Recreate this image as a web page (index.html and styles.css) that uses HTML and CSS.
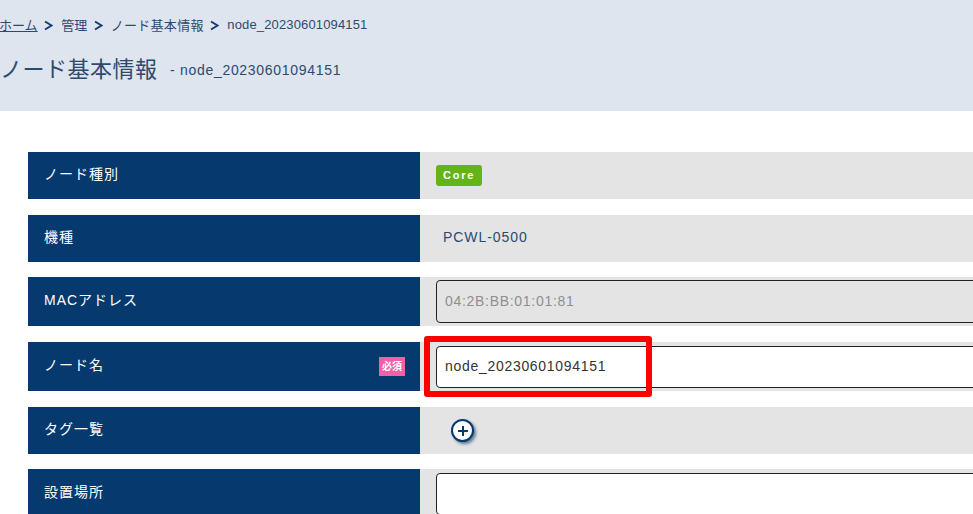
FILE: index.html
```html
<!doctype html>
<html lang="ja">
<head>
<meta charset="utf-8">
<title>ノード基本情報</title>
<link rel="stylesheet" href="styles.css">
</head>
<body>

<header class="pagehead">
  <ul class="crumbs">
    <li><a href="#">ホーム</a></li>
    <li class="sep"><svg width="9" height="11" viewBox="0 0 9 11"><path d="M1 1.5 7.5 5.5 1 9.5" fill="none" stroke="#163f6e" stroke-width="2"/></svg></li>
    <li>管理</li>
    <li class="sep"><svg width="9" height="11" viewBox="0 0 9 11"><path d="M1 1.5 7.5 5.5 1 9.5" fill="none" stroke="#163f6e" stroke-width="2"/></svg></li>
    <li class="crumbpage">ノード基本情報</li>
    <li class="sep"><svg width="9" height="11" viewBox="0 0 9 11"><path d="M1 1.5 7.5 5.5 1 9.5" fill="none" stroke="#163f6e" stroke-width="2"/></svg></li>
    <li class="crumbnode">node_20230601094151</li>
  </ul>
  <h1 class="pagetitle">ノード基本情報<span class="subtitle">- node_20230601094151</span></h1>
</header>

<div class="form">
  <div class="row r1">
    <div class="label"><span>ノード種別</span></div>
    <div class="value"><span class="badge">Core</span></div>
  </div>
  <div class="row r2">
    <div class="label"><span>機種</span></div>
    <div class="value"><span class="plain">PCWL-0500</span></div>
  </div>
  <div class="row r3">
    <div class="label"><span>MACアドレス</span></div>
    <div class="value"><input class="field disabled" type="text" value="04:2B:BB:01:01:81" disabled></div>
  </div>
  <div class="row r4">
    <div class="label"><span>ノード名</span><span class="required">必須</span></div>
    <div class="value"><input class="field" type="text" value="node_20230601094151"></div>
    <div class="callout"></div>
  </div>
  <div class="row r5">
    <div class="label"><span>タグ一覧</span></div>
    <div class="value">
      <button class="addbtn" type="button"><svg width="14" height="14" viewBox="0 0 14 14"><path d="M7 2v10M2 7h10" stroke="#07396d" stroke-width="2"/></svg></button>
    </div>
  </div>
  <div class="row r6">
    <div class="label"><span>設置場所</span></div>
    <div class="value"><input class="field" type="text"></div>
  </div>
</div>

</body>
</html>
```

FILE: styles.css
```css
html, body {margin: 0; padding: 0; height: 514px; overflow: hidden;}
body {background: #fff; color: #2c4a6e; font: 14px "Liberation Sans", "Noto Sans CJK JP", sans-serif; letter-spacing: 0.95px;}

.pagehead {height: 111px; background: #dee5ee; margin-bottom: 41px; padding-top: 15px; box-sizing: border-box; overflow: hidden;}
.crumbs {list-style: none; margin: 0 0 0 -1px; padding: 0; display: flex; align-items: center; font-size: 13px; letter-spacing: 0; height: 18px;}
.crumbs a {color: #2c4a6e;}
.crumbs .sep {margin: 3px 8px 0 6.5px; display: flex;}
.crumbpage {letter-spacing: 0.3px;}
.crumbnode {letter-spacing: 0.15px;}
.pagetitle {margin: 18px 0 0; font-size: 22px; font-weight: normal; letter-spacing: 0.5px; line-height: 36px; display: flex; align-items: center;}
.subtitle {font-size: 14px; letter-spacing: 0.7px; margin-left: 12.5px; margin-top: 1px;}

.form {margin-left: 28px;}
.row {display: flex; position: relative;}
.r1, .r2, .r5 {height: 47px;}
.r3, .r4 {height: 49px;}
.r6 {height: 48px;}
.r1, .r3, .r4 {margin-bottom: 16px;}
.r2, .r5 {margin-bottom: 15px;}

.label {width: 392px; flex: none; box-sizing: border-box; background: #063a6f; color: #fff; padding: 0 0 5px 16px; display: flex; align-items: center; justify-content: space-between; letter-spacing: 1px;}
.value {flex: 1; min-width: 0; overflow: hidden; background: #e4e4e4; display: flex; align-items: center; padding-left: 16px;}

.badge {background: #64b418; color: #fff; font-size: 11px; font-weight: bold; letter-spacing: 1.8px; border-radius: 3px; padding: 0 7px; height: 21px; line-height: 21px; box-sizing: border-box;}
.plain {margin: 0 0 3px 7px;}
.required {background: #f45fa8; color: #fff; font-size: 10px; font-weight: bold; letter-spacing: 0; width: 26px; height: 19px; line-height: 19px; text-align: center; margin: 5px 15px 0 0;}

.field {flex: none; width: 600px; height: 43px; box-sizing: border-box; border: 1px solid #222; border-radius: 4px; background: #fff; padding: 0 0 2px 8px; font: inherit; letter-spacing: 0.7px; color: #333;}
.field.disabled {background: #e4e4e4; color: #8f8f8f;}
.r4 .field {height: 42px;}
.r6 .field {height: 42px; margin-top: 2px;}

.callout {position: absolute; left: 396px; top: -6px; width: 228px; height: 61px; box-sizing: border-box; border: 6px solid #f00; border-radius: 3px;}

.addbtn {width: 23px; height: 23px; margin-left: 15px; padding: 0; border: 2px solid #07396d; border-radius: 50%; background: #fff; display: flex; align-items: center; justify-content: center; box-shadow: 2px 2px 3px rgba(7, 57, 109, 0.6); box-sizing: border-box;}
```
